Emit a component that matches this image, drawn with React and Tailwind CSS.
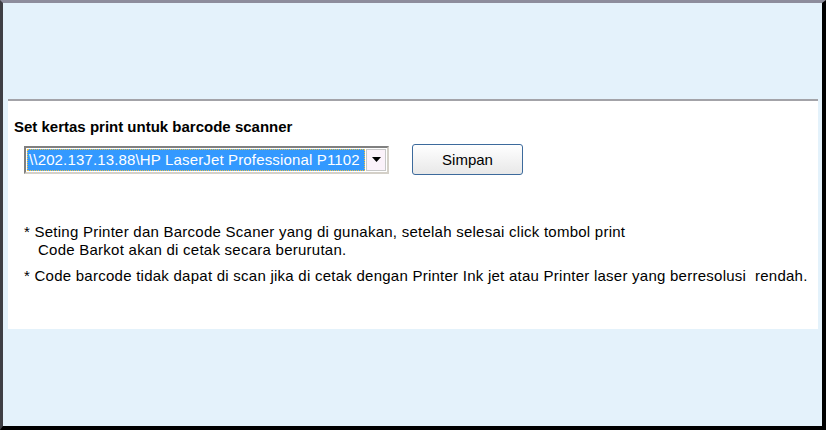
export default function App() {
  return (
    <div className="w-[826px] h-[430px] bg-[#e4f2fb] border-l-[3px] border-l-[#3f3f44] border-t-[3px] border-t-[#8d8d9c] border-r-4 border-r-black border-b-4 border-b-black pt-[96px] pl-[5px] pr-[4px] font-['Liberation_Sans',Arial,sans-serif] text-black">
      <div className="h-[230px] bg-white border-t-2 border-t-[#a3a3a8]">
        <div className="pt-[18px] pl-[6px] text-[15px] leading-[16px] font-bold">
          Set kertas print untuk barcode scanner
        </div>

        <div className="flex items-center mt-[9px] pl-[16px]">
          <div className="flex w-[365px] h-[28px] border-2 border-t-[#808080] border-l-[#808080] border-r-[#d4d0c8] border-b-[#d4d0c8] bg-white p-[1px]">
            <div className="flex-1 flex items-center bg-[#3399ff] border border-dotted border-[#f0c040] text-white text-[15px] tracking-[0.15px] leading-none px-[1px] overflow-hidden whitespace-nowrap">
              {"\\\\202.137.13.88\\HP LaserJet Professional P1102"}
            </div>
            <div className="w-[20px] ml-[1px] flex items-center justify-center bg-[#fbf2fa] border border-[#c8c8c8]">
              <svg width="9" height="5" viewBox="0 0 9 5">
                <path d="M0 0h9L4.5 5z" fill="#000" />
              </svg>
            </div>
          </div>

          <button className="ml-[23px] w-[111px] h-[31px] rounded-[3px] border border-[#3c6a9c] bg-gradient-to-b from-white to-[#e8e8e8] text-[15px] leading-none">
            Simpan
          </button>
        </div>

        <div className="mt-[48px] pl-[16px] text-[15px] tracking-[0.25px] leading-[18px]">
          <div>* Seting Printer dan Barcode Scaner yang di gunakan, setelah selesai click tombol print</div>
          <div className="pl-[14px]">Code Barkot akan di cetak secara berurutan.</div>
          <div className="mt-[8px]">* Code barcode tidak dapat di scan jika di cetak dengan Printer Ink jet atau Printer laser yang berresolusi&nbsp; rendah.</div>
        </div>
      </div>
    </div>
  )
}
